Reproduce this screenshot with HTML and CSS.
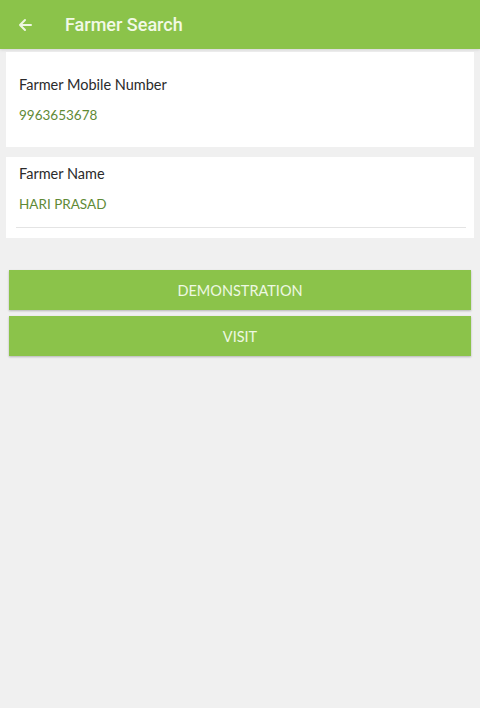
FILE: index.html
```html
<!DOCTYPE html>
<html>
<head>
<meta charset="utf-8">
<link rel="stylesheet" href="styles.css">
</head>
<body>
<div class="appbar">
  <svg class="back" width="16" height="16" viewBox="0 0 16 16"><path d="M14 8H3M8 3L3 8l5 5" fill="none" stroke="#eef7e2" stroke-width="2" stroke-linecap="round" stroke-linejoin="round"/></svg>
  <span class="title">Farmer Search</span>
</div>
<div class="card card-mobile">
  <div class="label">Farmer Mobile Number</div>
  <div class="value">9963653678</div>
</div>
<div class="card card-name">
  <div class="label">Farmer Name</div>
  <div class="value">HARI PRASAD</div>
  <div class="underline"></div>
</div>
<div class="buttons">
  <div class="btn">DEMONSTRATION</div>
  <div class="btn">VISIT</div>
</div>
</body>
</html>
```
FILE: styles.css
```css
html, body {
  margin: 0;
  padding: 0;
  background: #f0f0f0;
  width: 480px;
  height: 708px;
  font-family: Lato, "Noto Sans", sans-serif;
}
.appbar {
  height: 49px;
  background: #8bc34a;
  display: flex;
  align-items: center;
  box-shadow: 0 1px 3px rgba(0,0,0,0.12);
}
.back {
  margin-left: 17px;
  margin-right: 32px;
}
.title {
  font-family: Roboto, sans-serif;
  font-weight: 500;
  font-size: 18px;
  color: #f2f9e6;
}
.card {
  background: #fff;
  margin: 0 6px;
}
.card-mobile {
  margin-top: 3px;
  height: 95px;
  box-sizing: border-box;
  padding: 24px 13px 0;
}
.card-name {
  margin-top: 10px;
  height: 81px;
  box-sizing: border-box;
  padding: 8px 13px 0;
}
.label {
  font-size: 14.5px;
  line-height: 18px;
  color: #2b2b2b;
}
.value {
  font-size: 13.5px;
  line-height: 18px;
  color: #5f8a36;
  margin-top: 12px;
}
.underline {
  height: 1px;
  background: #e4e4e4;
  margin: 14px -5px 0 -3px;
}
.buttons {
  margin: 32px 9px 0;
  display: flex;
  flex-direction: column;
  gap: 6px;
}
.btn {
  height: 40px;
  background: #8bc34a;
  color: #eef8e2;
  font-size: 14.5px;
  font-weight: 400;
  display: flex;
  align-items: center;
  justify-content: center;
  box-shadow: 0 1px 2px rgba(0,0,0,0.25);
}
```
